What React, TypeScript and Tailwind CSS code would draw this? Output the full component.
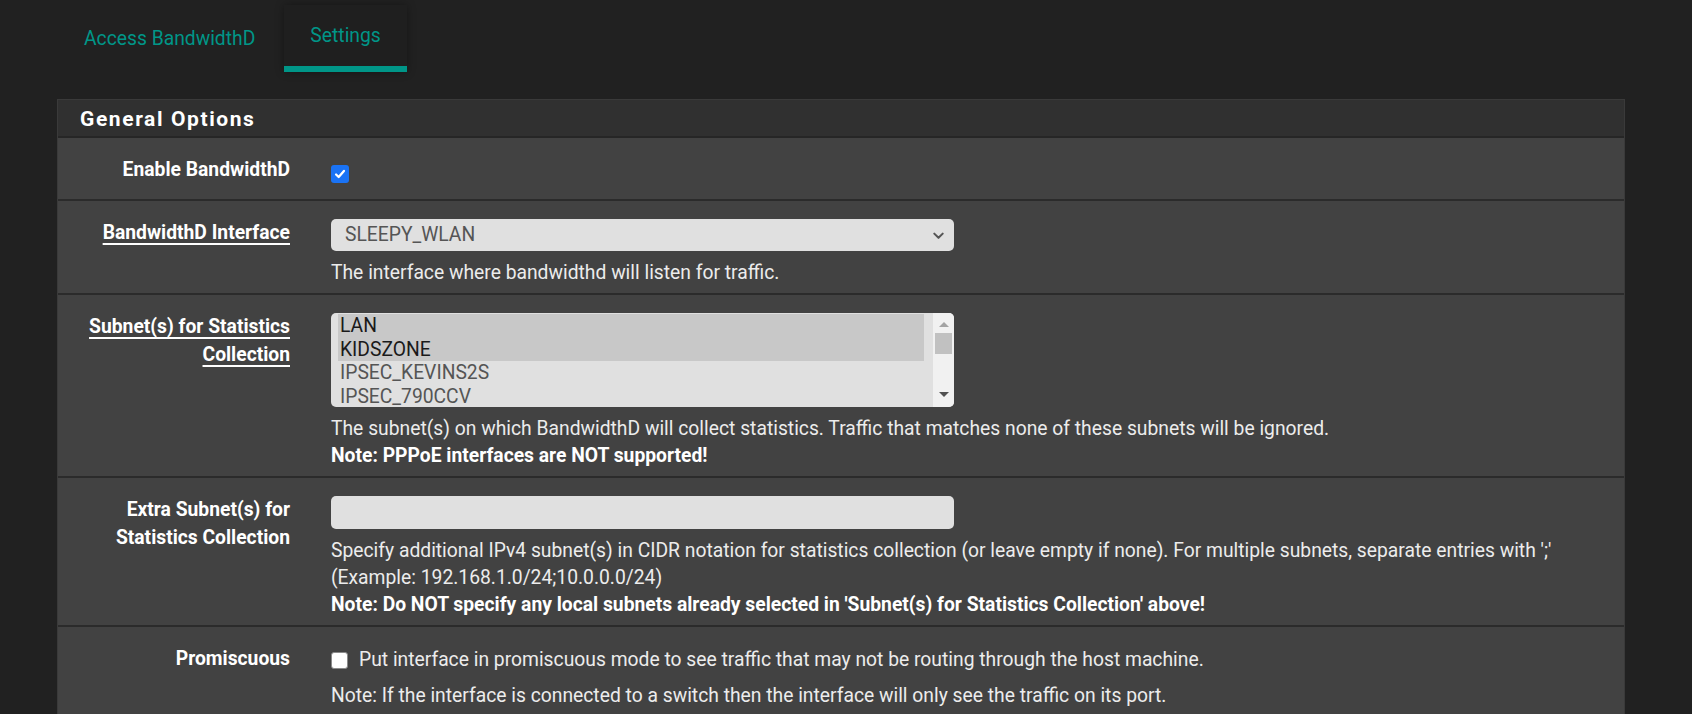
import React from 'react';

const font = { fontFamily: 'Roboto, "Liberation Sans", sans-serif' };

const Label = ({ children, link }: { children: React.ReactNode; link?: boolean }) => (
  <div className="w-[232px] shrink-0 pt-[18px] text-right text-[19.3px] font-bold leading-[28px] text-white">
    {link ? <span className="underline decoration-[1.5px] underline-offset-[4px]">{children}</span> : children}
  </div>
);

const Help = ({ children }: { children: React.ReactNode }) => (
  <div className="mt-[8px] text-[19.3px] leading-[27px] text-[#ececec]">{children}</div>
);

const Row = ({ children, first }: { children: React.ReactNode; first?: boolean }) => (
  <div className={`flex ${first ? '' : 'border-t-2 border-[#2b2b2b]'} bg-[#424242] pb-[7px]`}>{children}</div>
);

const Checkbox = ({ checked }: { checked?: boolean }) =>
  checked ? (
    <div className="flex h-[18px] w-[18px] items-center justify-center rounded-[3px] bg-[#1a73f5]">
      <svg viewBox="0 0 16 16" className="h-[14px] w-[14px]" fill="none" stroke="white" strokeWidth={2.6} strokeLinecap="round" strokeLinejoin="round">
        <path d="M3.5 8.5l3 3 6-7" />
      </svg>
    </div>
  ) : (
    <div className="h-[17px] w-[17px] shrink-0 rounded-[3px] border border-[#8a8a8a] bg-white" />
  );

export default function App() {
  return (
    <div className="min-h-screen bg-[#212121] pb-10" style={font}>
      <div className="flex pl-[57px] pt-[5px]">
        <div className="flex h-[67px] items-center px-[27px] pt-[1px] text-[19.3px] text-[#009688]">Access BandwidthD</div>
        <div className="ml-[2px] flex h-[67px] flex-col bg-[#1f1f1f] shadow-[0_0_8px_rgba(0,0,0,0.35)]">
          <div className="flex flex-1 items-center px-[26px] pt-[2px] text-[19.3px] text-[#009688]">Settings</div>
          <div className="h-[6px] bg-[#009688]" />
        </div>
      </div>

      <div className="ml-[57px] mt-[27px] w-[1568px] border border-[#3a3a3a]">
        <div className="flex h-[38px] items-center border-b-2 border-[#262626] bg-[#303030] pl-[22px] pt-[3px] text-[21px] font-bold tracking-[1.6px] text-white">
          General Options
        </div>

        <Row first>
          <Label>Enable BandwidthD</Label>
          <div className="ml-[41px] flex h-[54px] items-end pb-[9px]">
            <Checkbox checked />
          </div>
        </Row>

        <Row>
          <Label link>BandwidthD Interface</Label>
          <div className="ml-[41px] flex-1 pt-[18px] pr-4">
            <div className="flex h-[32px] w-[623px] items-center justify-between rounded-[5px] bg-[#e0e0e0] pl-[14px] pr-[8px] text-[19.3px] text-[#555]">
              <span>SLEEPY_WLAN</span>
              <svg viewBox="0 0 16 16" className="h-[15px] w-[15px]" fill="none" stroke="#555" strokeWidth={2.2} strokeLinecap="round" strokeLinejoin="round">
                <path d="M3.5 6l4.5 4.5L12.5 6" />
              </svg>
            </div>
            <Help>The interface where bandwidthd will listen for traffic.</Help>
          </div>
        </Row>

        <Row>
          <Label link>
            Subnet(s) for Statistics
            <br />
            Collection
          </Label>
          <div className="ml-[41px] flex-1 pt-[18px] pr-4">
            <div className="flex h-[94px] w-[623px] overflow-hidden rounded-[5px] bg-[#e0e0e0] text-[19.3px] leading-[23.6px]">
              <div className="flex-1 pl-[7px] pr-[9px] pt-[1px]">
                <div className="bg-[#c8c8c8] pl-[2px] text-[#1a1a1a]">LAN</div>
                <div className="bg-[#c8c8c8] pl-[2px] text-[#1a1a1a]">KIDSZONE</div>
                <div className="pl-[2px] text-[#555]">IPSEC_KEVINS2S</div>
                <div className="pl-[2px] text-[#555]">IPSEC_790CCV</div>
              </div>
              <div className="flex w-[21px] flex-col items-center bg-[#f1f1f1]">
                <div className="mt-[9px] h-0 w-0 border-x-[5px] border-b-[5px] border-x-transparent border-b-[#a3a3a3]" />
                <div className="mt-[6px] h-[21px] w-[17px] bg-[#c1c1c1]" />
                <div className="mt-auto mb-[10px] h-0 w-0 border-x-[5px] border-t-[5px] border-x-transparent border-t-[#505050]" />
              </div>
            </div>
            <Help>
              The subnet(s) on which BandwidthD will collect statistics. Traffic that matches none of these subnets will be ignored.
              <br />
              <span className="font-bold text-white">Note: PPPoE interfaces are NOT supported!</span>
            </Help>
          </div>
        </Row>

        <Row>
          <Label>
            Extra Subnet(s) for
            <br />
            Statistics Collection
          </Label>
          <div className="ml-[41px] flex-1 pt-[18px] pr-4">
            <div className="h-[33px] w-[623px] rounded-[5px] bg-[#e0e0e0]" />
            <Help>
              Specify additional IPv4 subnet(s) in CIDR notation for statistics collection (or leave empty if none). For multiple subnets, separate entries with ';'
              <br />
              (Example: 192.168.1.0/24;10.0.0.0/24)
              <br />
              <span className="font-bold text-white">
                Note: Do NOT specify any local subnets already selected in 'Subnet(s) for Statistics Collection' above!
              </span>
            </Help>
          </div>
        </Row>

        <Row>
          <Label>Promiscuous</Label>
          <div className="ml-[41px] flex-1 pt-[19px] pr-4">
            <div className="flex h-[28px] items-center gap-[11px] text-[19.3px] text-[#ececec]">
              <Checkbox />
              <span>Put interface in promiscuous mode to see traffic that may not be routing through the host machine.</span>
            </div>
            <Help>Note: If the interface is connected to a switch then the interface will only see the traffic on its port.</Help>
          </div>
        </Row>
      </div>
    </div>
  );
}
